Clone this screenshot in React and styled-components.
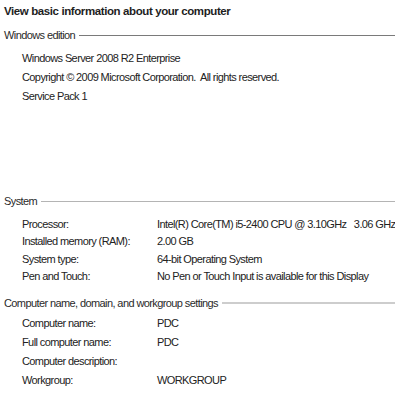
import React from "react";
import styled, { createGlobalStyle } from "styled-components";

const GlobalStyle = createGlobalStyle`
  body {
    margin: 0;
    background: #ffffff;
    font-family: "Liberation Sans", Arial, sans-serif;
    font-size: 11px;
    letter-spacing: -0.6px;
    color: #222222;
  }
`;

const Page = styled.div`
  width: 395px;
  height: 400px;
  padding-left: 4px;
  box-sizing: border-box;
  overflow: hidden;
`;

const Title = styled.h1`
  margin: 0;
  height: 22px;
  line-height: 22px;
  font-size: 11.5px;
  font-weight: bold;
  letter-spacing: -0.4px;
  color: #1e1e1e;
`;

const Section = styled.section`
  margin-top: ${(p) => p.$top}px;
`;

const Header = styled.div`
  display: flex;
  align-items: center;
  gap: 4px;
  height: 16px;
  white-space: nowrap;
  color: #2a2a2a;

  &::after {
    content: "";
    flex: 1;
    height: ${(p) => p.$thick || 1}px;
    background: ${(p) => p.$line};
  }
`;

const Rows = styled.div`
  padding-top: ${(p) => p.$pad}px;
  padding-left: 18px;
  display: grid;
  grid-template-columns: 135px 1fr;
  grid-auto-rows: ${(p) => p.$row}px;
  align-items: center;
`;

const Label = styled.div`
  white-space: nowrap;
`;

const Value = styled.div`
  white-space: pre;
`;

const Line = styled.div`
  grid-column: 1 / -1;
  white-space: pre;
`;

const System = [
  ["Processor:", "Intel(R) Core(TM) i5-2400 CPU @ 3.10GHz   3.06 GHz"],
  ["Installed memory (RAM):", "2.00 GB"],
  ["System type:", "64-bit Operating System"],
  ["Pen and Touch:", "No Pen or Touch Input is available for this Display"],
];

const Names = [
  ["Computer name:", "PDC"],
  ["Full computer name:", "PDC"],
  ["Computer description:", ""],
  ["Workgroup:", "WORKGROUP"],
];

const App = () => (
  <Page>
    <GlobalStyle />
    <Title>View basic information about your computer</Title>

    <Section $top={5}>
      <Header $line="#7a7a7a">Windows edition</Header>
      <Rows $pad={5} $row={19}>
        <Line>Windows Server 2008 R2 Enterprise</Line>
        <Line>Copyright © 2009 Microsoft Corporation.  All rights reserved.</Line>
        <Line>Service Pack 1</Line>
      </Rows>
    </Section>

    <Section $top={88}>
      <Header $line="#b4b4b4">System</Header>
      <Rows $pad={6} $row={17.5}>
        {System.map(([k, v]) => (
          <React.Fragment key={k}>
            <Label>{k}</Label>
            <Value>{v}</Value>
          </React.Fragment>
        ))}
      </Rows>
    </Section>

    <Section $top={10}>
      <Header $line="#cdcdcd" $thick={2}>
        Computer name, domain, and workgroup settings
      </Header>
      <Rows $pad={2} $row={19}>
        {Names.map(([k, v]) => (
          <React.Fragment key={k}>
            <Label>{k}</Label>
            <Value>{v}</Value>
          </React.Fragment>
        ))}
      </Rows>
    </Section>
  </Page>
);

export default App;
